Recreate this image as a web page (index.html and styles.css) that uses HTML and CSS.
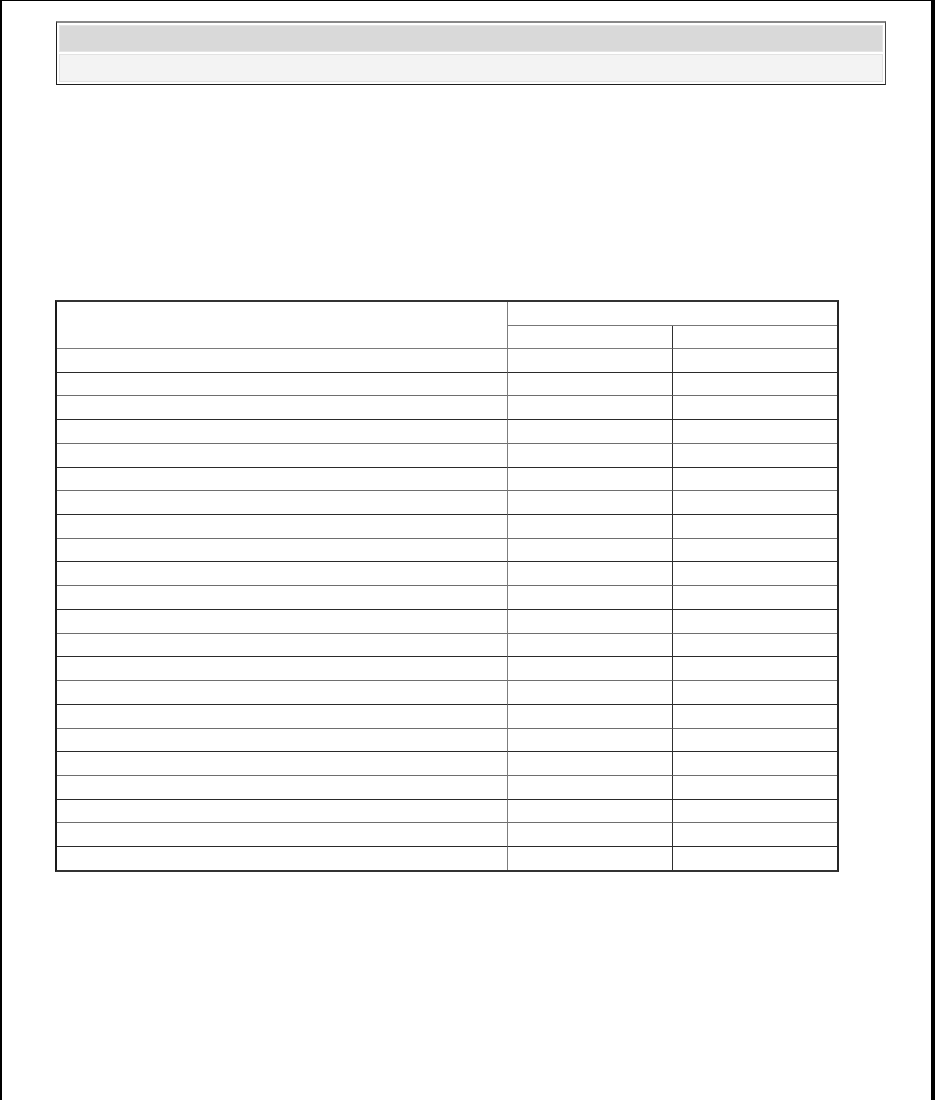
FILE: index.html
```html
<!DOCTYPE html>
<html lang="en">
<head>
<meta charset="utf-8">
<title>Document</title>
<link rel="stylesheet" href="styles.css">
</head>
<body>
<div class="page">
  <div class="doc-header">
    <div class="doc-title"></div>
    <div class="doc-subtitle"></div>
  </div>
  <table class="spec-table">
    <thead>
      <tr>
        <th class="col-item" rowspan="2"></th>
        <th class="col-group" colspan="2"></th>
      </tr>
      <tr>
        <th class="col-a sub"></th>
        <th class="col-b sub"></th>
      </tr>
    </thead>
    <tbody>
      <tr><td class="col-item"></td><td class="col-a"></td><td class="col-b"></td></tr>
      <tr><td class="col-item"></td><td class="col-a"></td><td class="col-b"></td></tr>
      <tr><td class="col-item"></td><td class="col-a"></td><td class="col-b"></td></tr>
      <tr><td class="col-item"></td><td class="col-a"></td><td class="col-b"></td></tr>
      <tr><td class="col-item"></td><td class="col-a"></td><td class="col-b"></td></tr>
      <tr><td class="col-item"></td><td class="col-a"></td><td class="col-b"></td></tr>
      <tr><td class="col-item"></td><td class="col-a"></td><td class="col-b"></td></tr>
      <tr><td class="col-item"></td><td class="col-a"></td><td class="col-b"></td></tr>
      <tr><td class="col-item"></td><td class="col-a"></td><td class="col-b"></td></tr>
      <tr><td class="col-item"></td><td class="col-a"></td><td class="col-b"></td></tr>
      <tr><td class="col-item"></td><td class="col-a"></td><td class="col-b"></td></tr>
      <tr><td class="col-item"></td><td class="col-a"></td><td class="col-b"></td></tr>
      <tr><td class="col-item"></td><td class="col-a"></td><td class="col-b"></td></tr>
      <tr><td class="col-item"></td><td class="col-a"></td><td class="col-b"></td></tr>
      <tr><td class="col-item"></td><td class="col-a"></td><td class="col-b"></td></tr>
      <tr><td class="col-item"></td><td class="col-a"></td><td class="col-b"></td></tr>
      <tr><td class="col-item"></td><td class="col-a"></td><td class="col-b"></td></tr>
      <tr><td class="col-item"></td><td class="col-a"></td><td class="col-b"></td></tr>
      <tr><td class="col-item"></td><td class="col-a"></td><td class="col-b"></td></tr>
      <tr><td class="col-item"></td><td class="col-a"></td><td class="col-b"></td></tr>
      <tr><td class="col-item"></td><td class="col-a"></td><td class="col-b"></td></tr>
      <tr><td class="col-item"></td><td class="col-a"></td><td class="col-b"></td></tr>
    </tbody>
  </table>
</div>
</body>
</html>
```

FILE: styles.css
```css
html, body {
  margin: 0;
  padding: 0;
  background: #ffffff;
  font-family: "Liberation Sans", Arial, sans-serif;
  font-size: 13px;
}

.page {
  box-sizing: border-box;
  width: 935px;
  height: 1100px;
  border-top: 1px solid #000;
  border-left: 2px solid #000;
  border-right: 4px solid #000;
  overflow: hidden;
  display: flex;
  flex-direction: column;
  align-items: flex-start;
}

.doc-header {
  box-sizing: border-box;
  width: 830px;
  margin: 20px 0 0 54px;
  border-top: 2px solid #888;
  border-left: 1px solid #1e1e1e;
  border-right: 1px solid #444;
  border-bottom: 1px solid #1e1e1e;
  padding: 2px;
  display: flex;
  flex-direction: column;
  gap: 2px;
}

.doc-title {
  box-sizing: border-box;
  height: 27px;
  background: #d9d9d9;
  border: 1px solid #e4e4e4;
}

.doc-subtitle {
  box-sizing: border-box;
  height: 28px;
  background: #f3f3f3;
  border: 1px solid #e2e2e2;
}

.spec-table {
  margin: 215px 0 0 53px;
  width: 784px;
  border-collapse: separate;
  border-spacing: 0;
  border-top: 2px solid #333;
  border-left: 2px solid #1a1a1a;
  border-right: 2px solid #262626;
  border-bottom: 2px solid #333;
  table-layout: fixed;
}

.spec-table th,
.spec-table td {
  box-sizing: border-box;
  padding: 0;
  border-bottom: 1px solid #2a2a2a;
}

.spec-table th.col-item,
.spec-table td.col-item {
  width: 451px;
  border-right: 1px solid #7c7c7c;
}

.spec-table .col-a {
  width: 165px;
  border-right: 1px solid #2f2f2f;
}

.spec-table .col-b {
  width: 164px;
}

.spec-table th.col-item {
  border-bottom-color: #7a7a7a;
}

.spec-table th.col-group {
  height: 24px;
  border-bottom-color: #777;
}

.spec-table th.sub {
  height: 23px;
  border-bottom-color: #7a7a7a;
}

.spec-table td {
  height: 23.73px;
}

.spec-table tbody tr:nth-child(even) td {
  border-bottom-color: #6e6e6e;
}

.spec-table tbody tr:last-child td {
  border-bottom: none;
  height: 22.73px;
}
```
